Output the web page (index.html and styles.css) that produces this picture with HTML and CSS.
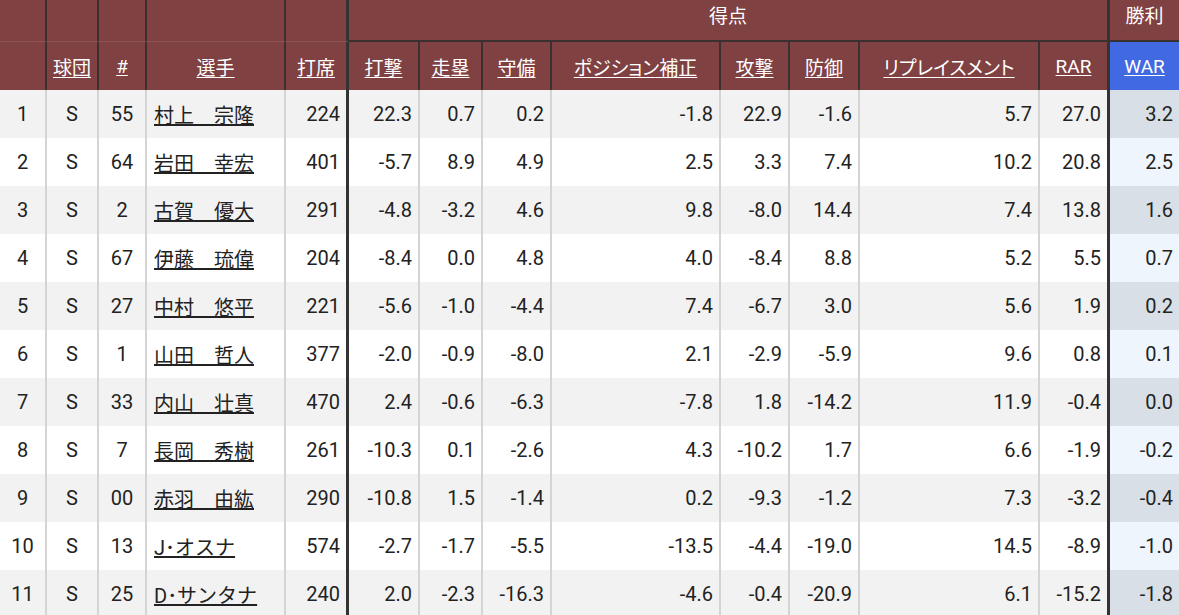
FILE: index.html
```html
<!DOCTYPE html>
<html lang="ja">
<head>
<meta charset="utf-8">
<title>WAR</title>
<link rel="stylesheet" href="styles.css">
</head>
<body>
<table class="stats">
  <colgroup>
    <col class="c-rank"><col class="c-team"><col class="c-num"><col class="c-name"><col class="c-pa">
    <col class="c-bat"><col class="c-run"><col class="c-fld"><col class="c-pos"><col class="c-off">
    <col class="c-def"><col class="c-rep"><col class="c-rar"><col class="c-war">
  </colgroup>
  <thead>
    <tr class="group-row">
      <th class="blank"></th><th class="blank"></th><th class="blank"></th><th class="blank"></th><th class="blank sep"></th>
      <th class="group sep" colspan="8">得点</th>
      <th class="group last">勝利</th>
    </tr>
    <tr class="label-row">
      <th></th>
      <th><a href="#">球団</a></th>
      <th><a href="#">#</a></th>
      <th><a href="#">選手</a></th>
      <th class="sep"><a href="#">打席</a></th>
      <th><a href="#">打撃</a></th>
      <th><a href="#">走塁</a></th>
      <th><a href="#">守備</a></th>
      <th><a href="#">ポジション補正</a></th>
      <th><a href="#">攻撃</a></th>
      <th><a href="#">防御</a></th>
      <th><a href="#">リプレイスメント</a></th>
      <th class="sep"><a href="#">RAR</a></th>
      <th class="war last"><a href="#">WAR</a></th>
    </tr>
  </thead>
  <tbody>
    <tr><td class="ctr">1</td><td class="ctr">S</td><td class="ctr">55</td><td class="name"><a href="#">村上　宗隆</a></td><td class="sep">224</td><td>22.3</td><td>0.7</td><td>0.2</td><td>-1.8</td><td>22.9</td><td>-1.6</td><td>5.7</td><td class="sep">27.0</td><td class="war last">3.2</td></tr>
    <tr><td class="ctr">2</td><td class="ctr">S</td><td class="ctr">64</td><td class="name"><a href="#">岩田　幸宏</a></td><td class="sep">401</td><td>-5.7</td><td>8.9</td><td>4.9</td><td>2.5</td><td>3.3</td><td>7.4</td><td>10.2</td><td class="sep">20.8</td><td class="war last">2.5</td></tr>
    <tr><td class="ctr">3</td><td class="ctr">S</td><td class="ctr">2</td><td class="name"><a href="#">古賀　優大</a></td><td class="sep">291</td><td>-4.8</td><td>-3.2</td><td>4.6</td><td>9.8</td><td>-8.0</td><td>14.4</td><td>7.4</td><td class="sep">13.8</td><td class="war last">1.6</td></tr>
    <tr><td class="ctr">4</td><td class="ctr">S</td><td class="ctr">67</td><td class="name"><a href="#">伊藤　琉偉</a></td><td class="sep">204</td><td>-8.4</td><td>0.0</td><td>4.8</td><td>4.0</td><td>-8.4</td><td>8.8</td><td>5.2</td><td class="sep">5.5</td><td class="war last">0.7</td></tr>
    <tr><td class="ctr">5</td><td class="ctr">S</td><td class="ctr">27</td><td class="name"><a href="#">中村　悠平</a></td><td class="sep">221</td><td>-5.6</td><td>-1.0</td><td>-4.4</td><td>7.4</td><td>-6.7</td><td>3.0</td><td>5.6</td><td class="sep">1.9</td><td class="war last">0.2</td></tr>
    <tr><td class="ctr">6</td><td class="ctr">S</td><td class="ctr">1</td><td class="name"><a href="#">山田　哲人</a></td><td class="sep">377</td><td>-2.0</td><td>-0.9</td><td>-8.0</td><td>2.1</td><td>-2.9</td><td>-5.9</td><td>9.6</td><td class="sep">0.8</td><td class="war last">0.1</td></tr>
    <tr><td class="ctr">7</td><td class="ctr">S</td><td class="ctr">33</td><td class="name"><a href="#">内山　壮真</a></td><td class="sep">470</td><td>2.4</td><td>-0.6</td><td>-6.3</td><td>-7.8</td><td>1.8</td><td>-14.2</td><td>11.9</td><td class="sep">-0.4</td><td class="war last">0.0</td></tr>
    <tr><td class="ctr">8</td><td class="ctr">S</td><td class="ctr">7</td><td class="name"><a href="#">長岡　秀樹</a></td><td class="sep">261</td><td>-10.3</td><td>0.1</td><td>-2.6</td><td>4.3</td><td>-10.2</td><td>1.7</td><td>6.6</td><td class="sep">-1.9</td><td class="war last">-0.2</td></tr>
    <tr><td class="ctr">9</td><td class="ctr">S</td><td class="ctr">00</td><td class="name"><a href="#">赤羽　由紘</a></td><td class="sep">290</td><td>-10.8</td><td>1.5</td><td>-1.4</td><td>0.2</td><td>-9.3</td><td>-1.2</td><td>7.3</td><td class="sep">-3.2</td><td class="war last">-0.4</td></tr>
    <tr><td class="ctr">10</td><td class="ctr">S</td><td class="ctr">13</td><td class="name"><a href="#">J･オスナ</a></td><td class="sep">574</td><td>-2.7</td><td>-1.7</td><td>-5.5</td><td>-13.5</td><td>-4.4</td><td>-19.0</td><td>14.5</td><td class="sep">-8.9</td><td class="war last">-1.0</td></tr>
    <tr><td class="ctr">11</td><td class="ctr">S</td><td class="ctr">25</td><td class="name"><a href="#">D･サンタナ</a></td><td class="sep">240</td><td>2.0</td><td>-2.3</td><td>-16.3</td><td>-4.6</td><td>-0.4</td><td>-20.9</td><td>6.1</td><td class="sep">-15.2</td><td class="war last">-1.8</td></tr>
  </tbody>
</table>
</body>
</html>
```

FILE: styles.css
```css
html, body {
  margin: 0;
  padding: 0;
  background: #ffffff;
}

body {
  font-family: "Roboto", "Noto Sans CJK JP", sans-serif;
  font-size: 20px;
  color: #222222;
}

.stats {
  width: 1179px;
  table-layout: fixed;
  border-collapse: separate;
  border-spacing: 0;
}

.c-rank { width: 47px; }
.c-team { width: 52px; }
.c-num  { width: 48px; }
.c-name { width: 139px; }
.c-pa   { width: 63px; }
.c-bat  { width: 71px; }
.c-run  { width: 63px; }
.c-fld  { width: 69px; }
.c-pos  { width: 169px; }
.c-off  { width: 69px; }
.c-def  { width: 70px; }
.c-rep  { width: 180px; }
.c-rar  { width: 70px; }
.c-war  { width: 69px; }

.stats th,
.stats td {
  box-sizing: border-box;
  padding: 0 6px;
  white-space: nowrap;
  overflow: hidden;
}

.stats th {
  background: #804142;
  color: #ffffff;
  font-size: 19px;
  font-weight: 400;
  font-feature-settings: "palt";
  text-align: center;
  border-right: 2px solid #3a3030;
}

.stats th a {
  color: #ffffff;
  text-decoration: underline;
  text-underline-offset: 2px;
}

.group-row th {
  height: 42px;
  vertical-align: top;
  padding-top: 4px;
  line-height: 26px;
}

.group-row th.blank {
  border-bottom: 1px solid #8e5253;
}

.group-row th.group {
  border-bottom: 2px solid #3a3030;
}

.label-row th {
  height: 48px;
  vertical-align: middle;
}

.stats th.war {
  background: #4169e1;
}

.stats td {
  height: 48px;
  text-align: right;
  vertical-align: middle;
  border-right: 2px solid #d4d4d4;
}

.stats td.ctr {
  text-align: center;
}

.stats td.name {
  text-align: left;
  padding-left: 7px;
}

.stats td.name a {
  color: #222222;
  text-decoration: underline;
  text-underline-offset: 1px;
}

.stats tbody tr:nth-child(odd) td {
  background: #f2f2f2;
}

.stats tbody tr:nth-child(even) td {
  background: #ffffff;
}

.stats tbody tr:nth-child(odd) td.war {
  background: #d9dfe6;
}

.stats tbody tr:nth-child(even) td.war {
  background: #eef5fc;
}

.stats th.sep,
.stats td.sep {
  border-right: 3px solid #333333;
}

.stats th.last,
.stats td.last {
  border-right: none;
}
```
